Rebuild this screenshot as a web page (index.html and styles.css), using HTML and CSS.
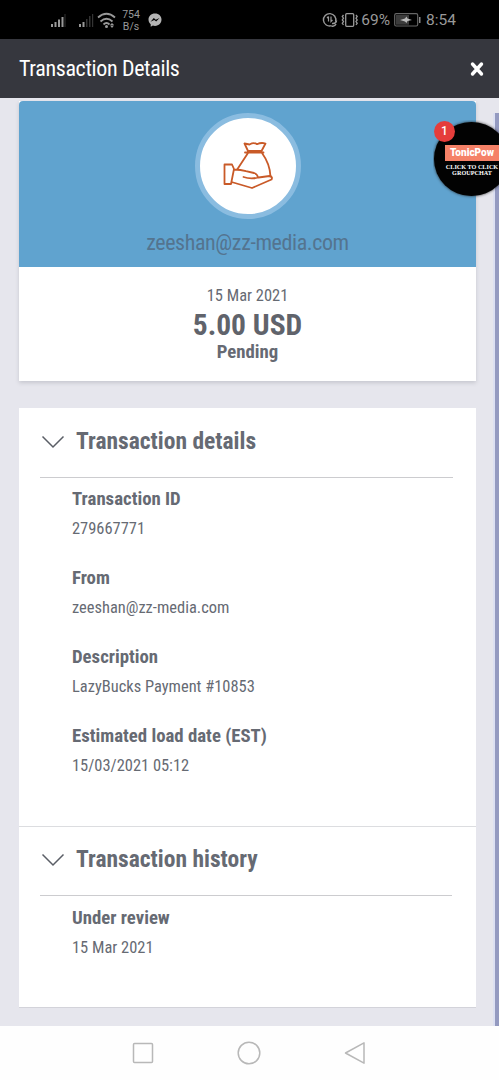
FILE: index.html
```html
<!DOCTYPE html>
<html lang="en">
<head>
<meta charset="utf-8">
<title>Transaction Details</title>
<link rel="stylesheet" href="styles.css">
</head>
<body>
<div class="screen">
  <div class="status">
    <div class="status-left">
      <svg class="signals" width="74" height="20" viewBox="0 0 74 20" fill="#999">
        <path d="M1 14h2v3H1zM4.500 12h2v5h-2zM8 9.500h2V17H8zM11.500 7h2v10h-2z"/>
        <path d="M29 14h2v3h-2zM32.500 12h2v5h-2z"/>
        <path fill="#333" d="M14.500 4h1v13h-1zM36 9h1.500v8H36zM39 6h1.500v11H39zM42 4h1.200v13H42z"/>
        <g fill="none" stroke="#999" stroke-width="1.800"><path d="M48 7.500q8.500-7.500 17 0M50.500 11.500q6-5.500 12 0M53.500 14.500q3-3 6 0"/></g>
        <circle cx="56.500" cy="16.500" r="1.500"/><path d="M60 15l2-2 2 2zM60 15.500h4l-2 2.500z"/>
      </svg>
      <div class="speed"><span>754</span><span>B/s</span></div>
      <svg class="messenger" width="14" height="15" viewBox="0 0 14 15"><path fill="#b4b4b4" d="M7 .5C3 .5.500 3.200.5 6.600c0 2 .9 3.600 2.200 4.700v2.500l2.200-1.200q1 .3 2.100.3c4 0 6.500-2.800 6.500-6.300S11 .5 7 .5z"/><path d="M2.500 8.700 5.800 5l2 1.800L11.500 5 8.200 8.600l-2-1.700z"/></svg>
    </div>
    <div class="status-right">
      <svg class="saver" width="16" height="16" viewBox="0 0 16 16" fill="none" stroke="#999" stroke-width="1.400"><path d="M13.600 9.500A6.200 6.200 0 1 0 9.500 13.700"/><path d="M6.500 4.500v5M5 6 6.500 4.500M9 4.500v5L10.500 8" stroke-width="1.200"/><path d="M10 11.500q4 .5 4.500-3M9.500 14q3 1 4.500-2" stroke-width="1.600"/></svg>
      <svg class="vibrate" width="20" height="16" viewBox="0 0 20 16" fill="none" stroke="#999" stroke-width="1.300"><rect x="5.700" y="1.700" width="8" height="12.600" rx="1"/><path d="M3.500 3 2.300 4.500l1.200 1.700-1.200 1.700 1.200 1.700-1.200 1.700 1.200 1.500M16 3l1.200 1.500L16 6.200l1.200 1.700L16 9.600l1.200 1.700-1.200 1.500"/></svg>
      <span class="percent">69%</span>
      <svg class="battery" width="27" height="14" viewBox="0 0 27 14"><rect x=".7" y=".7" width="23" height="12.300" rx="1.500" fill="none" stroke="#666" stroke-width="1.200"/><path fill="#3c3c3c" d="M2 2h13v9.700H2z"/><path fill="#bbb" d="m6 7 5-1.500 1.500-2 1 2L18 7l-4.500 1-1 2-1.500-1.500z"/><path fill="#888" d="M25 4h1.500v6H25z"/></svg>
      <span class="clock">8:54</span>
    </div>
  </div>
  <div class="header">
    <h1 class="title">Transaction Details</h1>
    <svg class="close" width="14" height="16" viewBox="0 0 14 16"><path d="m2.500 3 9 10M11.500 3l-9 10" fill="none" stroke="#fff" stroke-width="3.400" stroke-linecap="round"/></svg>
  </div>
  <div class="content">
    <section class="summary">
      <div class="banner">
        <div class="avatar">
          <svg width="52" height="50" viewBox="0 0 52 50" fill="none" stroke="#c95a28" stroke-width="1.800" stroke-linejoin="round" stroke-linecap="round">
            <path d="M26 10 22.500 2.500l5 1Q32 1 35 3.200q4-2 8.500-.7l-4 7.500zM23 11.500h18.500M26 12 15.500 28M40 12q8 11 8.500 23.500"/>
            <path d="M2.500 23.500H10l2 4.500-3 15H2.500zM12 28.500q7 0 12 1.700l8 1.800q3.500 1 4 4.500M21.500 36q7 2.500 15 .5l11-1.500q3.500.5 2 3.500L30 47 9.500 41"/>
          </svg>
        </div>
        <div class="email">zeeshan@zz-media.com</div>
      </div>
      <div class="totals">
        <div class="date">15 Mar 2021</div>
        <div class="amount">5.00 USD</div>
        <div class="state">Pending</div>
      </div>
    </section>
    <section class="details">
      <div class="group">
        <div class="group-head"><svg class="chevron" width="24" height="14" viewBox="0 0 24 14"><path d="m1.500 1.500 10.500 10.500L22.500 1.500"/></svg><h2 class="heading">Transaction details</h2></div>
        <dl class="fields">
          <div class="field"><dt>Transaction ID</dt><dd>279667771</dd></div>
          <div class="field"><dt>From</dt><dd>zeeshan@zz-media.com</dd></div>
          <div class="field"><dt>Description</dt><dd>LazyBucks Payment #10853</dd></div>
          <div class="field"><dt>Estimated load date (EST)</dt><dd>15/03/2021 05:12</dd></div>
        </dl>
      </div>
      <div class="group history">
        <div class="group-head"><svg class="chevron" width="24" height="14" viewBox="0 0 24 14"><path d="m1.500 1.500 10.500 10.500L22.500 1.500"/></svg><h2 class="heading">Transaction history</h2></div>
        <dl class="fields">
          <div class="field"><dt>Under review</dt><dd>15 Mar 2021</dd></div>
        </dl>
      </div>
    </section>
    <div class="scrollbar"></div>
  </div>
  <div class="nav">
    <svg width="24" height="24" viewBox="0 0 24 24"><rect x="2.500" y="2.500" width="19" height="19" rx="1"/></svg>
    <svg width="24" height="24" viewBox="0 0 24 24"><circle cx="12" cy="12" r="10.800"/></svg>
    <svg width="24" height="24" viewBox="0 0 24 24"><path d="M21 1.800v20.400L2.500 12z"/></svg>
  </div>
  <div class="bubble">
    <div class="disc"><div class="brand">TonicPow</div><div class="slogan"><span>CLICK TO CLICK</span><span>GROUPCHAT</span></div></div>
    <span class="badge">1</span>
  </div>
</div>
</body>
</html>
```
FILE: styles.css
```css
* { box-sizing: border-box; }
body, h1, h2, dl, dd { margin: 0; }
body { font-family: "Roboto Condensed", Roboto, sans-serif; font-stretch: 75%; color: #666a73; }
.screen { position: relative; width: 499px; height: 1080px; display: flex; flex-direction: column; overflow: hidden; background: #fefefe; }
.status { height: 39px; background: #000; color: #999; display: flex; justify-content: space-between; padding: 0 43px 0 50px; font-family: Roboto, sans-serif; font-stretch: 100%; }
.status-left, .status-right { display: flex; align-items: center; }
.status svg { display: block; }
.speed { display: flex; flex-direction: column; align-items: center; width: 22px; font-size: 10.500px; line-height: 12px; margin-left: -4px; margin-top: 2px; }
.messenger { margin-left: 6px; margin-top: 2px; }
.percent, .clock { font-size: 15.500px; white-space: nowrap; margin-top: 1px; }
.vibrate { margin: 0 1px 0 2px; }
.battery { margin: 0 5px 0 4px; }
.header { height: 59px; background: #36373e; display: flex; align-items: center; justify-content: space-between; padding: 0 15px 0 19px; }
.title { color: #fff; font-size: 22px; font-weight: 400; letter-spacing: -.35px; white-space: nowrap; }
.content { height: 928px; padding: 3px 23px 0 19px; background: #e6e6ed; position: relative; }
.scrollbar { position: absolute; top: 15px; right: 0; width: 6px; height: 913px; border-left: 2px solid #dce0f2; background: #949ac0; }
.summary { height: 280px; background: #fff; box-shadow: 0 2px 4px #c6c7cf; }
.banner { height: 166px; background: #60a3cf; border-radius: 4px 4px 0 0; display: flex; flex-direction: column; align-items: center; padding-top: 12px; }
.avatar { width: 106px; height: 106px; border: 5px solid #8abce0; border-radius: 50%; background: #fff; display: flex; align-items: center; justify-content: center; }
.email { font-size: 22px; line-height: 24px; letter-spacing: -.4px; margin-top: 12px; color: #54748f; white-space: nowrap; }
.totals { display: flex; flex-direction: column; align-items: center; padding-top: 19px; white-space: nowrap; }
.date { font-size: 16.450px; line-height: 20px; }
.amount { font-size: 29.500px; line-height: 34px; margin-top: 2px; font-weight: 700; color: #60636b; }
.state { font-size: 18.800px; line-height: 22px; margin-top: -1px; font-weight: 700; }
.details { height: 599px; margin-top: 27px; background: #fff; box-shadow: 0 1px 0 #d3d3da; }
.group { height: 418px; }
.history { height: 181px; border-top: 1px solid #dcdde0; }
.group-head { height: 70px; margin: 0 23px 0 21px; padding: 0 0 4px 1px; display: flex; align-items: center; border-bottom: 1px solid #cccccf; }
.history .group-head { height: 69px; margin-right: 24px; padding-bottom: 5px; }
.history .fields { padding-top: 10px; }
.chevron { fill: none; stroke: #5a5e66; stroke-width: 1.500; margin-top: 3px; }
.heading { font-size: 23.500px; font-weight: 700; margin-left: 11px; white-space: nowrap; }
.fields { padding: 9px 0 0 53px; }
.field { height: 79px; white-space: nowrap; }
dt { font-size: 18.800px; line-height: 24px; font-weight: 700; }
dd { font-size: 16.450px; line-height: 22px; margin-top: 7px; }
.nav { height: 54px; background: #fefefe; display: flex; align-items: center; justify-content: center; gap: 82px; padding-right: 1px; }
.nav svg { fill: none; stroke: #b8b8b8; stroke-width: 1.500; stroke-linejoin: round; }
.bubble { position: absolute; left: 433px; top: 120px; width: 66px; height: 80px; overflow: hidden; }
.disc { width: 75px; height: 74px; margin: 2px 0 0 1px; border-radius: 50%; background: #020202; box-shadow: 0 0 3px #222; padding: 23px 0 0 11px; }
.brand { width: 54px; height: 16px; background: #f58167; color: #fff; font: 900 10px/16px Roboto, sans-serif; text-align: center; }
.slogan { width: 54px; display: flex; flex-direction: column; align-items: center; margin-top: 3px; color: #fff; font: 700 6.200px/6px "Liberation Serif", serif; white-space: nowrap; }
.badge { position: absolute; left: 1px; top: 1px; width: 21px; height: 21px; border-radius: 50%; background: #e53d3b; color: #fff; font: 500 12px/21px Roboto, sans-serif; text-align: center; }
```
